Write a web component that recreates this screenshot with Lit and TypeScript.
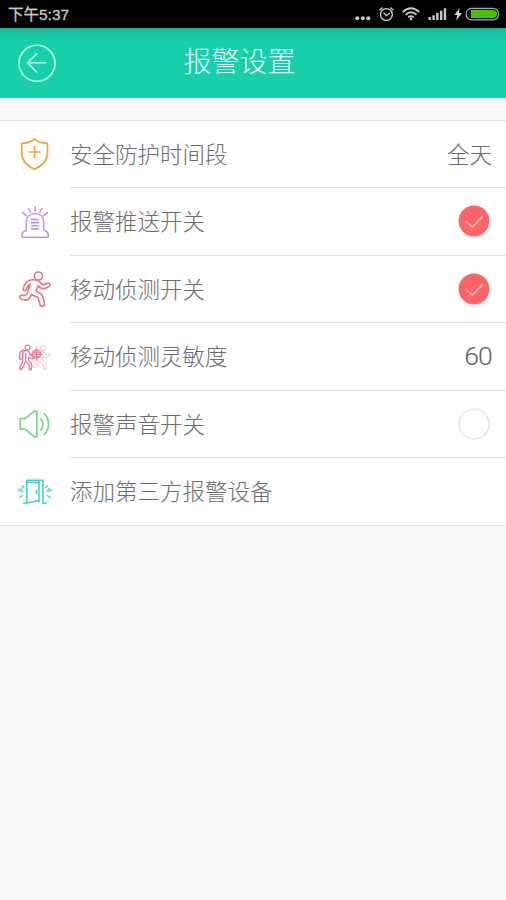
import { LitElement, html, svg, css, nothing } from "lit";
import { customElement } from "lit/decorators.js";

const shield = svg`<g stroke="#efa53a" stroke-width="1.7"><path d="M24.5 9C21 12 16 13.2 11.7 13.4V22C11.7 30 17 36 24.5 39.2C32 36 37.5 30 37.5 22V13.4C33 13.2 28 12 24.5 9Z"/><path d="M24.5 16.5V27.5M19 22H30"/></g>`;

const siren = svg`<g stroke="#bf93ec" stroke-width="1.6"><path d="M16.3 31.5V24C16.3 18.5 20 15.3 25 15.3S33.7 18.5 33.7 24V31.5C35 33 38.2 33 38.2 36V39H12V36C12 33 15 33 16.3 31.5Z"/><path d="M21.5 21.3H28.5M21.5 24.4H28.5M21.5 27.5H28.5M21.5 30.6H28.5M25.2 8.5V13M18.5 10.2L20.5 14M32 10.2L30 14M12.8 14.5L16.4 17.3M37.4 14.5L33.8 17.3"/></g>`;

const runner = svg`<g stroke="#e9727d" stroke-width="1.6"><circle cx="28.4" cy="11" r="4"/><path d="M23.3 14.8C20.5 14.6 18.2 15.5 16.5 17.3C14.8 19.3 13.4 21.5 13.2 24C13.1 26 15.4 26.4 16.2 24.8C17 22.6 18 20 20.2 19.2L17.8 27C16.8 29.3 15.8 31 13.4 30.4C10 29.4 8.7 32.7 11.2 34.1C16 36.4 19.6 35 21.5 29.4C24 31.7 27 31.3 28 32.5C29 35 29.2 37.2 30.2 40C31.2 42.6 34.9 41.3 34.5 38.6C34 35.5 33.4 31.4 31.4 29.2C29.8 27.6 27.2 27.5 26 26L28.2 20.6C30 23.2 32.4 24.5 35.5 23.2C37.3 22.4 39.4 21.8 40.2 20.4C40.6 18.5 38.5 17.6 37 18.3C34.8 19.6 32.8 21 31.4 18.8C29.7 16 26.7 15 23.3 14.8Z"/></g>`;

const sensitivity = svg`<g stroke-width="1.3"><g stroke="#dc7c9b"><circle cx="17.6" cy="15.3" r="2.5"/><path d="M13.8 18C11.5 18.2 9.8 20 9.7 22.5V26.8H12.5V21M15.3 18C18.6 18.2 19.6 20 20.2 23L23.8 25.2L23 26.8L18.4 25V27.5L21.4 31.6V37.4H19.2V32.5L15.6 28.6L14 33.2L11.4 37.4L9.3 36.3L12.6 30L13 20.2ZM15.6 21V28"/></g><g stroke="#e87d9c"><circle cx="26.4" cy="22" r="4.2"/><path d="M26.4 16.2V27.8M20.8 22H32M23 19.8H30M23.5 24.5H29.7"/></g><g stroke="#f8ced9" stroke-width="1.2"><circle cx="33" cy="16" r="2.5"/><path d="M29.8 19C33.8 18.5 35 20.5 35.5 23L39.8 21.4L40 23.3L35.6 25.5L33.6 24L32.5 27.8L36 31V37H33.6V32.2L29.5 28.8L27.2 34.5L22.8 35.2L22.4 33.2L25.8 32L28.4 26"/></g></g>`;

const speaker = svg`<g stroke="#79d489" stroke-width="1.7"><path d="M10.3 18.6H15.2L24.1 11.2C25.5 10.3 26.8 10.8 26.8 12.5V35.4C26.8 37.2 25.3 37.6 24 36.7L15.2 29.2H10.3Z"/><path d="M30.8 19C33.6 21.7 33.6 27 30.8 30M34.3 13.8C40 19.3 40 28.8 34.3 34.4"/></g>`;

const door = svg`<g stroke="#45d3c1" stroke-width="1.6"><path d="M13.5 36.5H16.8V13.7H33V36.5H36.2M17 15.5L29 16.2V34L17 36.5M29 15V35M26.6 23.8V27"/><path stroke-width="1.3" d="M12.3 19.2L14.2 21.3M8.3 23.4L13 25.2M12.6 29L9.7 31.2M37.5 19.2L35.5 21.3M41.7 23.4L37 25.2M37.3 29L40.4 31.2M10.6 22L12.2 23M39.3 22L37.8 23"/></g>`;

type Row = { icon: unknown; dy: number; label: string; value?: string; on?: boolean };

const rows: Row[] = [
  { icon: shield, dy: 0, label: "安全防护时间段", value: "全天" },
  { icon: siren, dy: -1.25, label: "报警推送开关", on: true },
  { icon: runner, dy: -1, label: "移动侦测开关", on: true },
  { icon: sensitivity, dy: -0.25, label: "移动侦测灵敏度", value: "60" },
  { icon: speaker, dy: -1, label: "报警声音开关", on: false },
  { icon: door, dy: -0.5, label: "添加第三方报警设备" },
];

@customElement("status-bar")
class StatusBar extends LitElement {
  static styles = css`
    :host { display: flex; justify-content: space-between; height: 28px; background: #000; color: #c9c9c9; }
    .time { padding-left: 8px; font: 400 15.5px/29px "Liberation Sans", "Noto Sans CJK SC", sans-serif; -webkit-text-stroke: 0.3px #c9c9c9; }
    svg { display: block; }
  `;
  render() {
    return html`<span class="time">下午5:37</span>
      <svg width="160" height="28" viewBox="346 0 160 28" fill="none" stroke="#c9c9c9" stroke-width="1.4">
        <g fill="#c9c9c9" stroke="none"><circle cx="357.3" cy="18.3" r="2"/><circle cx="362.8" cy="18.3" r="2"/><circle cx="368.3" cy="18.3" r="2"/></g>
        <circle cx="386.4" cy="14.5" r="5.9"/>
        <path d="M383.5 12.8L386.4 15.5L389.8 13M379.5 10.2L382.5 7.5M390.3 7.5L393.4 10.2"/>
        <g stroke-width="1.8"><path d="M402.7 12Q411 4.5 419.3 12M405.5 14.8Q411 9.8 416.5 14.8M408.2 17.3Q411 14.9 413.8 17.3"/></g>
        <circle cx="411" cy="19" r="1.4" fill="#c9c9c9" stroke="none"/>
        <path stroke-width="2.4" d="M429.7 20V17M433.6 20V15.2M437.4 20V13M441.2 20V10.7M445 20V8.3"/>
        <path fill="#d8d8d8" stroke="none" d="M459.6 8L454.4 15H457.5L456 20.7L462 13H458.8Z"/>
        <rect x="466.2" y="8.4" width="32.3" height="11.4" rx="5.2" stroke="#aaa" stroke-width="1.2"/>
        <path fill="#46c200" stroke="none" d="M471 10H493.5Q497 10 497 14T493.5 18.1H471Z"/>
      </svg>`;
  }
}

@customElement("title-bar")
class TitleBar extends LitElement {
  static styles = css`
    :host { display: grid; grid-template-columns: 74px 1fr 101px; height: 70px; align-items: center;
      background: linear-gradient(#1bb493 0, #18c9a6 7px, #17cfab 14px); }
    .back { display: block; margin-left: 17px; }
    .title { margin: 0; padding: 0 0 7px; text-align: center; color: #e4fff9;
      font: 300 28px/40px "Noto Sans CJK SC", sans-serif; }
  `;
  render() {
    return html`<svg class="back" width="40" height="40" viewBox="0 0 40 40" fill="none" stroke="#b5fbed" stroke-width="1.6">
        <circle cx="20" cy="20.3" r="18"/><path d="M29.2 19.8H10.5M20.2 10.4L10.5 19.8L20.2 29.5"/>
      </svg><h1 class="title">报警设置</h1>`;
  }
}

@customElement("round-check")
class RoundCheck extends LitElement {
  static properties = { on: { type: Boolean } };
  declare on: boolean;
  static styles = css`
    :host { display: block; }
    svg { display: block; }
  `;
  render() {
    return html`<svg width="32" height="32" viewBox="0 0 32 32" fill="none">
      ${this.on
        ? svg`<circle cx="16" cy="16" r="15.4" fill="#fd6467"/><path d="M8.2 16.5L14.5 22.2L24.9 11" stroke="#ffc4c5" stroke-width="1.3"/>`
        : svg`<circle cx="16" cy="16" r="15" stroke="#dedede" stroke-width="1.2"/>`}
    </svg>`;
  }
}

@customElement("app-root")
class AppRoot extends LitElement {
  static styles = css`
    :host { display: block; min-height: 900px; background: #f9f9f9; }
    .list { margin: 22px 0 0; padding: 0; list-style: none; background: #fff; border-top: 1px solid #e2e2e2; border-bottom: 1px solid #e2e2e2; }
    .row { display: flex; height: 67.5px; }
    .row:first-child { height: 67px; }
    .row:last-child { height: 66.5px; }
    .icon { flex: none; margin-left: 10px; align-self: center; fill: none; stroke-linecap: round; stroke-linejoin: round; }
    .body { flex: 1; margin-left: 10px; padding-right: 14px; display: flex; align-items: center; justify-content: space-between;
      border-bottom: 1px solid #e2e2e2; color: #6c6c6c; font: 300 22.5px/34px "Noto Sans CJK SC", sans-serif; }
    .row:last-child .body { border-bottom: 0; }
    .label, .text { padding-bottom: 2.4px; }
    .number { font: 300 26.5px/34px Roboto, sans-serif; letter-spacing: -0.8px; color: #5f5f5f; }
    round-check { margin-right: 2px; }
  `;
  render() {
    return html`<status-bar></status-bar><title-bar></title-bar>
      <ul class="list">
        ${rows.map((r) => html`<li class="row">
          <svg class="icon" width="50" height="50" viewBox="0 ${r.dy} 50 50">${r.icon}</svg>
          <div class="body"><span class="label">${r.label}</span>
            ${r.value ? html`<span class=${/^\d+$/.test(r.value) ? "number" : "text"}>${r.value}</span>` : nothing}
            ${r.on === undefined ? nothing : html`<round-check .on=${r.on}></round-check>`}
          </div></li>`)}
      </ul>`;
  }
}
